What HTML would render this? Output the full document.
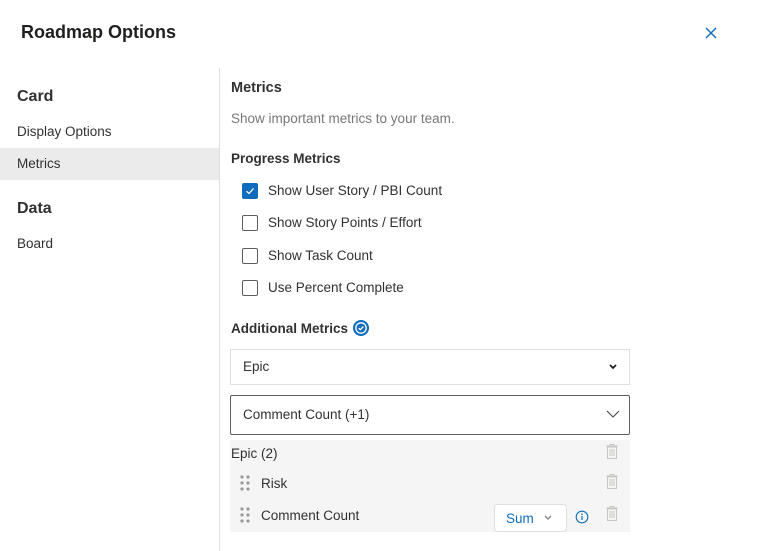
<!DOCTYPE html>
<html><head><style>
body{margin:0;width:760px;height:551px;background:#fff;font-family:"Liberation Sans",sans-serif;color:#323130;position:relative;overflow:hidden}
.a{position:absolute;white-space:nowrap}
.cb{position:absolute;left:242px;width:14px;height:14px;border:1px solid #605e5c;border-radius:2px;background:#fff}
.t{font-size:13.5px}
.trash{position:absolute;left:606px;width:12px;height:15px}
.grip{position:absolute;left:240px;width:10px;height:16px}
</style></head><body>
<div class="a" style="left:21px;top:22px;font-size:18px;font-weight:bold;color:#201f1e">Roadmap Options</div>
<svg class="a" style="left:705px;top:27px" width="12" height="12" viewBox="0 0 12 12"><path d="M1 1L11 11M11 1L1 11" stroke="#0f6cbd" stroke-width="1.4"/></svg>
<div class="a" style="left:219px;top:68px;width:1px;height:483px;background:#e1dfdd"></div>
<div class="a" style="left:17px;top:88px;font-size:16px;font-weight:bold">Card</div>
<div class="a t" style="left:17px;top:124px">Display Options</div>
<div class="a" style="left:0;top:148px;width:219px;height:32px;background:#ebebeb"></div>
<div class="a t" style="left:17px;top:156px">Metrics</div>
<div class="a" style="left:17px;top:200px;font-size:16px;font-weight:bold">Data</div>
<div class="a t" style="left:17px;top:236px">Board</div>

<div class="a" style="left:231px;top:80px;font-size:14.5px;font-weight:bold">Metrics</div>
<div class="a t" style="left:231px;top:111px;color:#797775">Show important metrics to your team.</div>
<div class="a" style="left:231px;top:151px;font-size:13.5px;font-weight:bold">Progress Metrics</div>
<div class="cb" style="top:183px;background:#0f6cbd;border-color:#0f6cbd"><svg width="14" height="14" viewBox="0 0 14 14"><path d="M3.5 7.2L6 9.5L10.5 4.5" stroke="#fff" stroke-width="1.3" fill="none"/></svg></div>
<div class="a t" style="left:268px;top:183px">Show User Story / PBI Count</div>
<div class="cb" style="top:215px"></div><div class="a t" style="left:268px;top:215px">Show Story Points / Effort</div>
<div class="cb" style="top:248px"></div><div class="a t" style="left:268px;top:248px">Show Task Count</div>
<div class="cb" style="top:280px"></div><div class="a t" style="left:268px;top:280px">Use Percent Complete</div>
<div class="a" style="left:231px;top:321px;font-size:13.5px;font-weight:bold">Additional Metrics</div>
<svg class="a" style="left:352px;top:319px" width="18" height="18" viewBox="0 0 18 18"><circle cx="9" cy="9" r="8" fill="#0f6cbd"/><circle cx="9" cy="9" r="5.2" fill="none" stroke="#fff" stroke-width="1.3"/><path d="M6.6 9.1L8.3 10.7L11.4 7.5" stroke="#fff" stroke-width="1.3" fill="none"/></svg>
<div class="a" style="left:230px;top:349px;width:398px;height:34px;border:1px solid #e1dfdd"></div>
<div class="a t" style="left:243px;top:359px">Epic</div>
<svg class="a" style="left:608px;top:363px" width="10" height="8" viewBox="0 0 10 8"><path d="M2 2L5 5L8 2" stroke="#201f1e" stroke-width="1.8" fill="none"/></svg>
<div class="a" style="left:230px;top:395px;width:398px;height:38px;border:1px solid #605e5c;border-radius:2px"></div>
<div class="a t" style="left:243px;top:407px">Comment Count (+1)</div>
<svg class="a" style="left:606px;top:410px" width="14" height="8" viewBox="0 0 14 8"><path d="M1 1L7 7L13 1" stroke="#444" stroke-width="1.1" fill="none"/></svg>
<div class="a" style="left:230px;top:440px;width:400px;height:92px;background:#f5f5f5"></div>
<div class="a t" style="left:231px;top:446px">Epic (2)</div>
<div class="a t" style="left:261px;top:476px">Risk</div>
<div class="a t" style="left:261px;top:508px">Comment Count</div>
<svg class="grip" style="top:475px" viewBox="0 0 10 16"><g fill="#999"><circle cx="2" cy="2" r="1.6"/><circle cx="8" cy="2" r="1.6"/><circle cx="2" cy="8" r="1.6"/><circle cx="8" cy="8" r="1.6"/><circle cx="2" cy="14" r="1.6"/><circle cx="8" cy="14" r="1.6"/></g></svg>
<svg class="grip" style="top:507px" viewBox="0 0 10 16"><g fill="#999"><circle cx="2" cy="2" r="1.6"/><circle cx="8" cy="2" r="1.6"/><circle cx="2" cy="8" r="1.6"/><circle cx="8" cy="8" r="1.6"/><circle cx="2" cy="14" r="1.6"/><circle cx="8" cy="14" r="1.6"/></g></svg>
<svg class="trash" style="top:444px" viewBox="0 0 12 15"><path d="M0 2H12M4 2V0.5H8V2M1.5 3H10.5V14.5H1.5Z" fill="none" stroke="#c8c6c4" stroke-width="1"/><path d="M4 5V12M6 5V12M8 5V12" stroke="#c8c6c4"/></svg>
<svg class="trash" style="top:474px" viewBox="0 0 12 15"><path d="M0 2H12M4 2V0.5H8V2M1.5 3H10.5V14.5H1.5Z" fill="none" stroke="#c8c6c4" stroke-width="1"/><path d="M4 5V12M6 5V12M8 5V12" stroke="#c8c6c4"/></svg>
<svg class="trash" style="top:506px" viewBox="0 0 12 15"><path d="M0 2H12M4 2V0.5H8V2M1.5 3H10.5V14.5H1.5Z" fill="none" stroke="#c8c6c4" stroke-width="1"/><path d="M4 5V12M6 5V12M8 5V12" stroke="#c8c6c4"/></svg>
<div class="a" style="left:494px;top:504px;width:71px;height:26px;border:1px solid #e1dfdd;border-radius:4px;background:#fff"></div>
<div class="a t" style="left:506px;top:511px;color:#0f6cbd">Sum</div>
<svg class="a" style="left:543px;top:514px" width="10" height="7" viewBox="0 0 10 7"><path d="M2 2L5 5L8 2" stroke="#888" stroke-width="1.4" fill="none"/></svg>
<svg class="a" style="left:575px;top:510px" width="14" height="14" viewBox="0 0 14 14"><circle cx="7" cy="7" r="5.8" fill="none" stroke="#0f6cbd" stroke-width="1.1"/><path d="M7 6V10" stroke="#0f6cbd" stroke-width="1.2"/><circle cx="7" cy="4.2" r=".8" fill="#0f6cbd"/></svg>
</body></html>
